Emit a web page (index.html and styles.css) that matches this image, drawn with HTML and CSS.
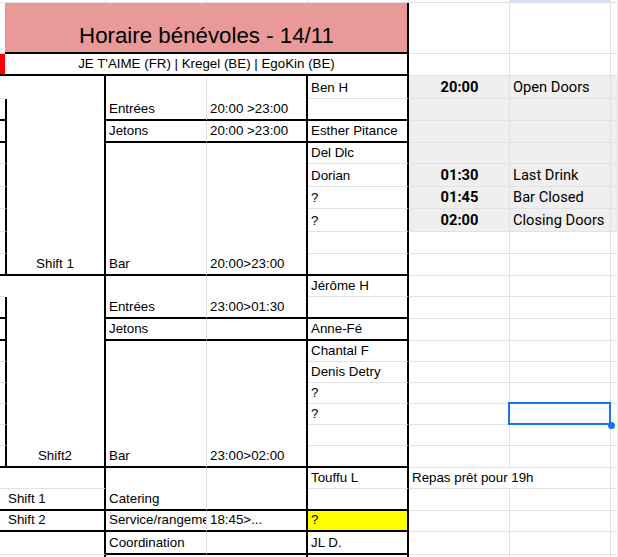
FILE: index.html
```html
<!DOCTYPE html>
<html lang="fr">
<head>
<meta charset="utf-8">
<title>Horaire bénévoles - 14/11</title>
<link rel="stylesheet" href="styles.css">
</head>
<body>
<div class="sheet">
  <!-- r0 -->
  <div class="c"></div><div class="c"></div><div class="c"></div><div class="c"></div><div class="c"></div><div class="c"></div><div class="c sel-col"></div><div class="c"></div>
  <!-- r1 -->
  <div class="c br"></div>
  <div class="c cs4 br bb pink title">Horaire bénévoles - 14/11</div>
  <div class="c"></div><div class="c"></div><div class="c"></div>
  <!-- r2 -->
  <div class="c br bb red"></div>
  <div class="c cs4 br bb ctr">JE T'AIME (FR) | Kregel (BE) | EgoKin (BE)</div>
  <div class="c"></div><div class="c"></div><div class="c"></div>
  <!-- r3 -->
  <div class="c br"></div>
  <div class="c rs9 br bb ctr">Shift 1</div>
  <div class="c rs2 bb">Entrées</div>
  <div class="c rs2 br bb">20:00 &gt;23:00</div>
  <div class="c br">Ben H</div>
  <div class="c g time">20:00</div><div class="c g ev">Open Doors</div><div class="c g"></div>
  <!-- r4 -->
  <div class="c br bb"></div>
  <div class="c br bb"></div>
  <div class="c g"></div><div class="c g"></div><div class="c g"></div>
  <!-- r5 -->
  <div class="c br bb"></div>
  <div class="c bb">Jetons</div>
  <div class="c br bb">20:00 &gt;23:00</div>
  <div class="c br bb">Esther Pitance</div>
  <div class="c g"></div><div class="c g"></div><div class="c g"></div>
  <!-- r6 -->
  <div class="c br"></div>
  <div class="c rs6 bb">Bar</div>
  <div class="c rs6 br bb">20:00&gt;23:00</div>
  <div class="c br">Del Dlc</div>
  <div class="c g"></div><div class="c g"></div><div class="c g"></div>
  <!-- r7 -->
  <div class="c br"></div>
  <div class="c br">Dorian</div>
  <div class="c g time">01:30</div><div class="c g ev">Last Drink</div><div class="c g"></div>
  <!-- r8 -->
  <div class="c br"></div>
  <div class="c br">?</div>
  <div class="c g time">01:45</div><div class="c g ev">Bar Closed</div><div class="c g"></div>
  <!-- r9 -->
  <div class="c br"></div>
  <div class="c br">?</div>
  <div class="c g time">02:00</div><div class="c g ev">Closing Doors</div><div class="c g"></div>
  <!-- r10 -->
  <div class="c br"></div>
  <div class="c br"></div>
  <div class="c"></div><div class="c"></div><div class="c"></div>
  <!-- r11 -->
  <div class="c br bb"></div>
  <div class="c br bb"></div>
  <div class="c"></div><div class="c"></div><div class="c"></div>
  <!-- r12 -->
  <div class="c br"></div>
  <div class="c rs9 br bb ctr">Shift2</div>
  <div class="c rs2 bb">Entrées</div>
  <div class="c rs2 br bb">23:00&gt;01:30</div>
  <div class="c br">Jérôme H</div>
  <div class="c"></div><div class="c"></div><div class="c"></div>
  <!-- r13 -->
  <div class="c br bb"></div>
  <div class="c br bb"></div>
  <div class="c"></div><div class="c"></div><div class="c"></div>
  <!-- r14 -->
  <div class="c br bb"></div>
  <div class="c bb">Jetons</div>
  <div class="c br bb"></div>
  <div class="c br bb">Anne-Fé</div>
  <div class="c"></div><div class="c"></div><div class="c"></div>
  <!-- r15 -->
  <div class="c br"></div>
  <div class="c rs6 bb">Bar</div>
  <div class="c rs6 br bb">23:00&gt;02:00</div>
  <div class="c br">Chantal F</div>
  <div class="c"></div><div class="c"></div><div class="c"></div>
  <!-- r16 -->
  <div class="c br"></div>
  <div class="c br">Denis Detry</div>
  <div class="c"></div><div class="c"></div><div class="c"></div>
  <!-- r17 -->
  <div class="c br"></div>
  <div class="c br">?</div>
  <div class="c"></div><div class="c"></div><div class="c"></div>
  <!-- r18 -->
  <div class="c br"></div>
  <div class="c br">?</div>
  <div class="c"></div><div class="c"></div><div class="c"></div>
  <!-- r19 -->
  <div class="c br"></div>
  <div class="c br"></div>
  <div class="c"></div><div class="c"></div><div class="c"></div>
  <!-- r20 -->
  <div class="c br bb"></div>
  <div class="c br bb"></div>
  <div class="c"></div><div class="c"></div><div class="c"></div>
  <!-- r21 -->
  <div class="c br"></div>
  <div class="c br"></div>
  <div class="c rs2 bb">Catering</div>
  <div class="c rs2 br bb"></div>
  <div class="c br">Touffu L</div>
  <div class="c cs2">Repas prêt pour 19h</div>
  <div class="c"></div>
  <!-- r22 -->
  <div class="c br bb"></div>
  <div class="c br bb">Shift 1</div>
  <div class="c br bb"></div>
  <div class="c"></div><div class="c"></div><div class="c"></div>
  <!-- r23 -->
  <div class="c br bb"></div>
  <div class="c br bb">Shift 2</div>
  <div class="c bb clip">Service/rangement</div>
  <div class="c br bb">18:45&gt;...</div>
  <div class="c br bb yel">?</div>
  <div class="c"></div><div class="c"></div><div class="c"></div>
  <!-- r24 -->
  <div class="c br"></div>
  <div class="c br"></div>
  <div class="c bb">Coordination</div>
  <div class="c br bb"></div>
  <div class="c br bb">JL D.</div>
  <div class="c"></div><div class="c"></div><div class="c"></div>
  <!-- r25 -->
  <div class="c br"></div>
  <div class="c br"></div>
  <div class="c"></div>
  <div class="c br"></div>
  <div class="c br"></div>
  <div class="c"></div><div class="c"></div><div class="c"></div>

  <div class="selection"><span class="handle"></span></div>
</div>
</body>
</html>
```
FILE: styles.css
```css
html, body {
  margin: 0;
  padding: 0;
  background: #ffffff;
  overflow: hidden;
}

.sheet {
  position: relative;
  display: grid;
  width: 618px;
  height: 557px;
  overflow: hidden;
  grid-template-columns: 5px 101px 101px 101px 101px 101px 101px 7px;
  grid-template-rows: 3px 51px 22px 23px 22px 22px 21px 23px 22px 23px 22px 22px 21px 22px 22px 21px 21px 21px 21px 21px 22px 21px 22px 21px 23px 21px;
  font-family: "Liberation Sans", Arial, sans-serif;
  font-size: 13.33px;
  color: #000000;
}

.c {
  box-sizing: border-box;
  display: flex;
  align-items: flex-end;
  min-width: 0;
  overflow: hidden;
  white-space: nowrap;
  padding: 0 2px 2px 3px;
  line-height: 16px;
  background: #ffffff;
  border-right: 1px solid #e2e2e2;
  border-bottom: 1px solid #e2e2e2;
}

.clip { padding-right: 0; }

.br { border-right: 2px solid #000000; }
.bb { border-bottom: 2px solid #000000; }

.cs2 { grid-column: span 2; }
.cs4 { grid-column: span 4; }
.rs2 { grid-row: span 2; }
.rs6 { grid-row: span 6; }
.rs9 { grid-row: span 9; }

.ctr { justify-content: center; }

.pink { background: #ea9999; }
.red { background: #ff0000; }
.yel { background: #ffff00; }
.g { background: #efefef; }
.sel-col { background: #d3e3fd; }

.title {
  justify-content: center;
  font-size: 22.3px;
  line-height: 26px;
  padding-bottom: 3px;
}

.time {
  justify-content: center;
  font-family: Roboto, "Liberation Sans", sans-serif;
  font-weight: 700;
  font-size: 14.67px;
  line-height: 18px;
}

.ev {
  font-family: Roboto, "Liberation Sans", sans-serif;
  font-size: 14.67px;
  line-height: 18px;
}

.selection {
  position: absolute;
  left: 508px;
  top: 402px;
  width: 103px;
  height: 23px;
  box-sizing: border-box;
  border: 2px solid #1a73e8;
  pointer-events: none;
}

.handle {
  position: absolute;
  right: -6px;
  bottom: -6px;
  width: 7px;
  height: 7px;
  border-radius: 50%;
  background: #1a73e8;
}
```
